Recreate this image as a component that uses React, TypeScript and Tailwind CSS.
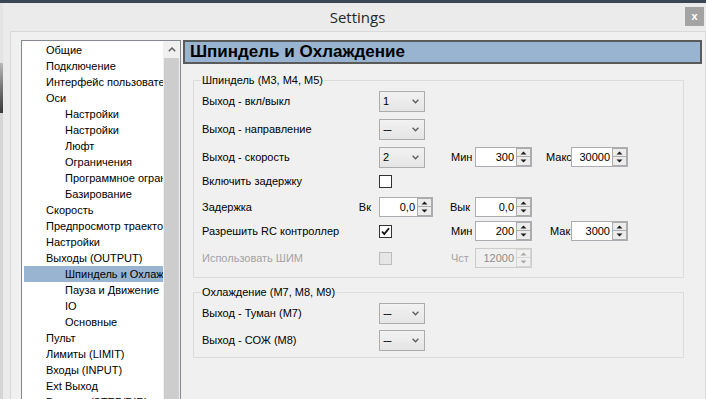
import React from 'react';

type TreeItem = { label: string; level: number; selected?: boolean };

const treeItems: TreeItem[] = [
  { label: 'Общие', level: 0 },
  { label: 'Подключение', level: 0 },
  { label: 'Интерфейс пользователя', level: 0 },
  { label: 'Оси', level: 0 },
  { label: 'Настройки', level: 1 },
  { label: 'Настройки', level: 1 },
  { label: 'Люфт', level: 1 },
  { label: 'Ограничения', level: 1 },
  { label: 'Программное ограничение', level: 1 },
  { label: 'Базирование', level: 1 },
  { label: 'Скорость', level: 0 },
  { label: 'Предпросмотр траектории', level: 0 },
  { label: 'Настройки', level: 0 },
  { label: 'Выходы (OUTPUT)', level: 0 },
  { label: 'Шпиндель и Охлаждение', level: 1, selected: true },
  { label: 'Пауза и Движение', level: 1 },
  { label: 'IO', level: 1 },
  { label: 'Основные', level: 1 },
  { label: 'Пульт', level: 0 },
  { label: 'Лимиты (LIMIT)', level: 0 },
  { label: 'Входы (INPUT)', level: 0 },
  { label: 'Ext Выход', level: 0 },
  { label: 'Выходы (STEP/DIR)', level: 0 },
];

const Combo: React.FC<{ value: string }> = ({ value }) => (
  <div className="flex h-[21px] w-[46px] items-center justify-between border border-[#acacac] bg-linear-to-b from-[#f2f2f2] to-[#e5e5e5] pl-[3px] pr-[5px]">
    <span className={`leading-none ${value === '---' ? 'tracking-[-1px]' : ''}`}>{value}</span>
    <svg width="7" height="5" viewBox="0 0 7 5" className="shrink-0">
      <path d="M0.6 0.8 L3.5 3.8 L6.4 0.8" fill="none" stroke="#606060" strokeWidth="1.4" />
    </svg>
  </div>
);

const SpinBox: React.FC<{ value: string; width: string; disabled?: boolean }> = ({ value, width, disabled }) => {
  const arrow = disabled ? '#a8a8a8' : '#1e1e1e';
  return (
    <div
      className={`flex h-[20px] border ${width} ${
        disabled ? 'border-[#cccccc] bg-[#f0f0f0] text-[#8d8d8d]' : 'border-[#abadb3] bg-white text-black'
      }`}
    >
      <div className="flex-1 pr-[2px] text-right leading-[18px]">{value}</div>
      <div className={`flex w-[15px] flex-col border ${disabled ? 'border-[#d6d6d6] bg-[#f0f0f0]' : 'border-[#acacac] bg-[#ececec]'}`}>
        <div className={`flex h-[8px] items-center justify-center border-b ${disabled ? 'border-[#d6d6d6]' : 'border-[#acacac]'}`}>
          <svg width="7" height="4" viewBox="0 0 7 4">
            <path d="M0.5 3.5 L3.5 0.5 L6.5 3.5 Z" fill={arrow} />
          </svg>
        </div>
        <div className="flex flex-1 items-center justify-center">
          <svg width="7" height="4" viewBox="0 0 7 4">
            <path d="M0.5 0.5 L3.5 3.5 L6.5 0.5 Z" fill={arrow} />
          </svg>
        </div>
      </div>
    </div>
  );
};

const CheckBox: React.FC<{ checked?: boolean; disabled?: boolean }> = ({ checked, disabled }) => (
  <div
    className={`flex h-[13px] w-[13px] items-center justify-center border ${
      disabled ? 'border-[#bcbcbc] bg-[#e6e6e6]' : 'border-[#333333] bg-white'
    }`}
  >
    {checked && (
      <svg width="11" height="11" viewBox="0 0 11 11">
        <path d="M2 5.5 L4.3 8 L9 2.2" fill="none" stroke="#111" strokeWidth="1.8" />
      </svg>
    )}
  </div>
);

const Row: React.FC<{ className?: string; children: React.ReactNode }> = ({ className = '', children }) => (
  <div className={`flex h-[24px] items-center pl-[1px] ${className}`}>{children}</div>
);

export default function App() {
  return (
    <div className="relative flex h-[399px] w-[706px] flex-col overflow-hidden bg-[#ebebeb] font-['Liberation_Sans',Arial,sans-serif] text-[11px] text-black">
      <div className="h-[3px] shrink-0 bg-[#3b4654]" />
      <div className="flex min-h-0 flex-1">
        <div className="flex w-[3px] shrink-0 flex-col">
          <div className="h-[60px] bg-[#e4e4e4]" />
          <div className="h-[50px] bg-linear-to-b from-[#b8b8b8] to-[#3a3a3a]" />
          <div className="flex-1 bg-[#d6d6d6]" />
        </div>
        <div className="flex min-w-0 flex-1 flex-col">
          <div className="relative h-[28px] shrink-0">
            <div className="pl-[6px] text-center font-['Open_Sans',sans-serif] text-[15px] leading-[28px] text-[#262626]">
              Settings
            </div>
            <div className="absolute right-[2px] top-[4px] flex h-[19px] w-[19px] items-center justify-center bg-[#a3a3a3] text-[11px] font-bold leading-none text-white">
              x
            </div>
          </div>
          <div className="ml-[7px] flex min-h-0 flex-1 border-l border-r border-t border-[#d9d9d9] bg-[#f0f0f0] pt-[8px]">
            {/* tree */}
            <div className="ml-[10px] flex w-[160px] shrink-0 border-l border-r border-t border-[#828790] bg-white">
              <div className="w-[141px] overflow-hidden pt-[1px]">
                {treeItems.map((item, i) => (
                  <div
                    key={i}
                    className={`h-[16px] whitespace-nowrap leading-[16px] ${
                      item.selected ? 'ml-[2px] bg-[#99b4d1] pl-[41px]' : item.level ? 'pl-[43px]' : 'pl-[24px]'
                    }`}
                  >
                    {item.label}
                  </div>
                ))}
              </div>
              <div className="flex w-[17px] flex-col bg-[#f0f0f0]">
                <div className="flex h-[17px] items-center justify-center">
                  <svg width="8" height="5" viewBox="0 0 8 5">
                    <path d="M0.8 4.2 L4 1 L7.2 4.2" fill="none" stroke="#606060" strokeWidth="1.5" />
                  </svg>
                </div>
                <div className="mx-[1px] flex-1 bg-[#cdcdcd]" />
              </div>
            </div>

            {/* panel */}
            <div className="min-w-0 flex-1">
              <div className="ml-[2px] mr-[3px] flex h-[24px] items-center border-2 border-[#5a5a5a] bg-[#99b4d1] pl-[5px] text-[17px] font-bold">
                Шпиндель и Охлаждение
              </div>

              <fieldset className="ml-[12px] mt-[9px] w-[491px] border border-[#dcdcdc] pb-[7px] pl-[7px]">
                <legend className="px-[1px] leading-[14px]">Шпиндель (M3, M4, M5)</legend>
                <Row className="mt-[2px]">
                  <div className="w-[177px]">Выход - вкл/выкл</div>
                  <Combo value="1" />
                </Row>
                <Row className="mt-[4px]">
                  <div className="w-[177px]">Выход - направление</div>
                  <Combo value="---" />
                </Row>
                <Row className="mt-[4px]">
                  <div className="w-[177px]">Выход - скорость</div>
                  <div className="w-[72px]">
                    <Combo value="2" />
                  </div>
                  <div className="w-[24px]">Мин</div>
                  <SpinBox value="300" width="w-[57px]" />
                  <div className="ml-[14px] w-[25px]">Макс</div>
                  <SpinBox value="30000" width="w-[57px]" />
                </Row>
                <Row>
                  <div className="w-[177px]">Включить задержку</div>
                  <CheckBox />
                </Row>
                <Row className="mt-[2px]">
                  <div className="flex w-[177px] justify-between pr-[8px]">
                    <span>Задержка</span>
                    <span>Вк</span>
                  </div>
                  <div className="w-[72px]">
                    <SpinBox value="0,0" width="w-[54px]" />
                  </div>
                  <div className="-ml-[1px] w-[25px]">Вык</div>
                  <SpinBox value="0,0" width="w-[57px]" />
                </Row>
                <Row>
                  <div className="w-[177px]">Разрешить RC контроллер</div>
                  <div className="w-[72px]">
                    <CheckBox checked />
                  </div>
                  <div className="w-[24px]">Мин</div>
                  <SpinBox value="200" width="w-[57px]" />
                  <div className="ml-[18px] w-[21px]">Мак</div>
                  <SpinBox value="3000" width="w-[57px]" />
                </Row>
                <Row className="mt-[3px] text-[#a3a3a3]">
                  <div className="w-[177px]">Использовать ШИМ</div>
                  <div className="w-[72px]">
                    <CheckBox disabled />
                  </div>
                  <div className="w-[24px]">Чст</div>
                  <SpinBox value="12000" width="w-[57px]" disabled />
                </Row>
              </fieldset>

              <fieldset className="ml-[12px] mt-[7px] w-[491px] border border-[#dcdcdc] pb-[5px] pl-[7px]">
                <legend className="px-[1px] leading-[14px]">Охлаждение (M7, M8, M9)</legend>
                <Row className="mt-[2px]">
                  <div className="w-[177px]">Выход - Туман (M7)</div>
                  <Combo value="---" />
                </Row>
                <Row className="mt-[3px]">
                  <div className="w-[177px]">Выход - СОЖ (M8)</div>
                  <Combo value="---" />
                </Row>
              </fieldset>
            </div>
          </div>
        </div>
      </div>
    </div>
  );
}
